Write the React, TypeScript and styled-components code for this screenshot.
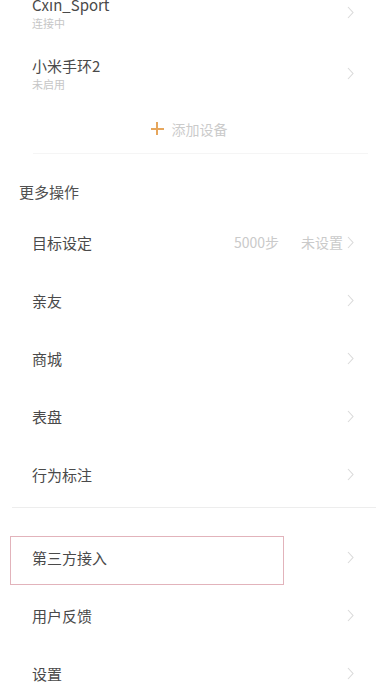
import React from 'react'
import styled, { createGlobalStyle } from 'styled-components'

const GlobalStyle = createGlobalStyle`
  html, body {
    margin: 0;
    padding: 0;
    background: #ffffff;
    overflow: hidden;
  }
  body {
    font-family: 'Noto Sans CJK SC', 'Noto Sans', sans-serif;
  }
`

const Page = styled.div`
  width: 378px;
  height: 689px;
  overflow: hidden;
  background: #fff;
`

const Scroller = styled.div`
  margin-top: -18px;
`

const DeviceRow = styled.div`
  height: 61px;
  display: flex;
  align-items: center;
  justify-content: space-between;
  padding: 0 24px 0 32px;
`

const DeviceInfo = styled.div`
  display: flex;
  flex-direction: column;
`

const DeviceName = styled.div`
  font-size: 15px;
  line-height: 20px;
  color: #4a4a4a;
`

const DeviceStatus = styled.div`
  font-size: 11px;
  line-height: 15px;
  margin-top: 1px;
  color: #c6c6c6;
`

const AddDevice = styled.div`
  height: 49px;
  display: flex;
  align-items: center;
  justify-content: center;
  gap: 8px;
  font-size: 14px;
  color: #cbcbcb;
`

const Plus = styled.span`
  position: relative;
  width: 13px;
  height: 13px;
  display: inline-block;
  &::before,
  &::after {
    content: '';
    position: absolute;
    background: #e6a65c;
  }
  &::before {
    left: 0;
    top: 5.5px;
    width: 13px;
    height: 2px;
  }
  &::after {
    top: 0;
    left: 5.5px;
    width: 2px;
    height: 13px;
  }
`

const Divider = styled.div<{ $inset: number; $right: number; $top: number; $color: string }>`
  height: 1px;
  margin: ${p => p.$top}px ${p => p.$right}px 0 ${p => p.$inset}px;
  background: ${p => p.$color};
`

const SectionTitle = styled.div`
  padding: 28px 0 11px 19px;
  font-size: 15px;
  line-height: 20px;
  color: #505050;
`

const Row = styled.div`
  position: relative;
  height: 58px;
  display: flex;
  align-items: center;
  padding: 0 24px 0 32px;
`

const RowLabel = styled.div`
  flex: 1;
  font-size: 15px;
  color: #4a4a4a;
`

const RowValue = styled.div`
  display: flex;
  align-items: center;
  font-size: 14px;
  color: #cacaca;
  margin-right: 4px;
`

const Steps = styled.span`
  margin-right: 22px;
`

const Highlight = styled.div`
  position: absolute;
  left: 10px;
  top: 8px;
  width: 272px;
  height: 47px;
  border: 1px solid #e2b3bb;
  pointer-events: none;
`

const Spacer = styled.div`
  height: 20px;
`

const Chevron = () => (
  <svg width="7" height="13" viewBox="0 0 7 13" fill="none">
    <polyline points="1,1 6,6.5 1,12" stroke="#dadada" strokeWidth="1.1" />
  </svg>
)

const MenuRow = ({ label, children, marked }: { label: string; children?: React.ReactNode; marked?: boolean }) => (
  <Row>
    {marked && <Highlight />}
    <RowLabel>{label}</RowLabel>
    {children}
    <Chevron />
  </Row>
)

export default function App() {
  return (
    <Page>
      <GlobalStyle />
      <Scroller>
        <DeviceRow>
          <DeviceInfo>
            <DeviceName>Cxin_Sport</DeviceName>
            <DeviceStatus>连接中</DeviceStatus>
          </DeviceInfo>
          <Chevron />
        </DeviceRow>
        <DeviceRow>
          <DeviceInfo>
            <DeviceName>小米手环2</DeviceName>
            <DeviceStatus>未启用</DeviceStatus>
          </DeviceInfo>
          <Chevron />
        </DeviceRow>
        <AddDevice>
          <Plus />
          添加设备
        </AddDevice>
        <Divider $inset={33} $right={10} $top={0} $color="#f5f5f5" />
        <SectionTitle>更多操作</SectionTitle>
        <MenuRow label="目标设定">
          <RowValue>
            <Steps>5000步</Steps>
            未设置
          </RowValue>
        </MenuRow>
        <MenuRow label="亲友" />
        <MenuRow label="商城" />
        <MenuRow label="表盘" />
        <MenuRow label="行为标注" />
        <Divider $inset={12} $right={2} $top={4} $color="#ededed" />
        <Spacer />
        <MenuRow label="第三方接入" marked />
        <MenuRow label="用户反馈" />
        <MenuRow label="设置" />
      </Scroller>
    </Page>
  )
}
